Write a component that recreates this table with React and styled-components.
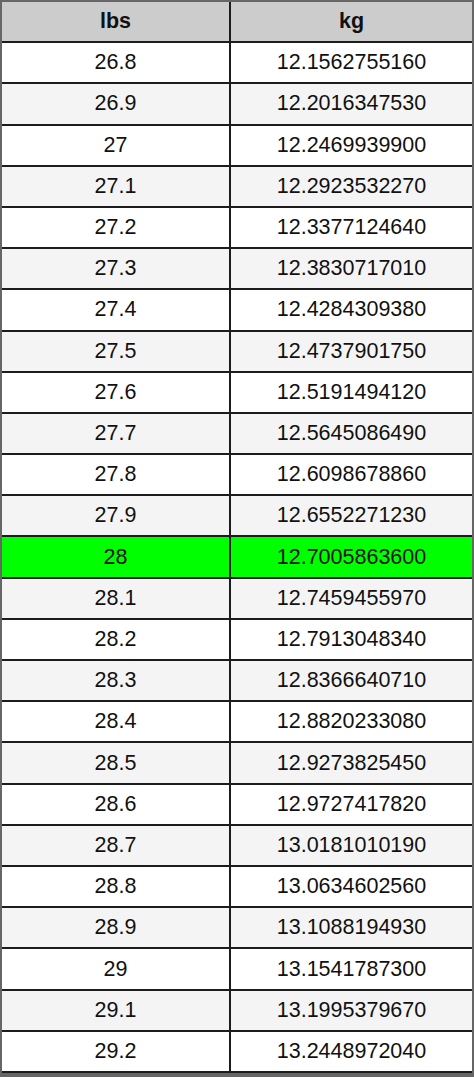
import styled, { createGlobalStyle } from 'styled-components'

const GlobalStyle = createGlobalStyle`
  html, body {
    margin: 0;
    padding: 0;
    background: #ffffff;
  }
  body {
    font-family: 'Liberation Sans', Arial, sans-serif;
  }
`

const rows = [
  ['26.8', '12.1562755160'],
  ['26.9', '12.2016347530'],
  ['27', '12.2469939900'],
  ['27.1', '12.2923532270'],
  ['27.2', '12.3377124640'],
  ['27.3', '12.3830717010'],
  ['27.4', '12.4284309380'],
  ['27.5', '12.4737901750'],
  ['27.6', '12.5191494120'],
  ['27.7', '12.5645086490'],
  ['27.8', '12.6098678860'],
  ['27.9', '12.6552271230'],
  ['28', '12.7005863600'],
  ['28.1', '12.7459455970'],
  ['28.2', '12.7913048340'],
  ['28.3', '12.8366640710'],
  ['28.4', '12.8820233080'],
  ['28.5', '12.9273825450'],
  ['28.6', '12.9727417820'],
  ['28.7', '13.0181010190'],
  ['28.8', '13.0634602560'],
  ['28.9', '13.1088194930'],
  ['29', '13.1541787300'],
  ['29.1', '13.1995379670'],
  ['29.2', '13.2448972040'],
]

const Frame = styled.div`
  box-sizing: border-box;
  width: 474px;
  height: 1077px;
  border: 2px solid #666666;
  border-bottom-width: 4px;
  display: grid;
  grid-template-rows: repeat(26, 1fr);
`

const Row = styled.div`
  display: grid;
  grid-template-columns: 227px 1fr;
  border-bottom: 2px solid #1c1c1c;
  background: ${props => props.bg};
  min-height: 0;
`

const Cell = styled.div`
  display: flex;
  align-items: center;
  justify-content: center;
  font-size: 21.5px;
  font-weight: ${props => (props.head ? 700 : 400)};
  color: #111111;
  & + & {
    border-left: 2px solid #1c1c1c;
  }
`

const rowColor = (lbs, i) => {
  if (lbs === '28') return '#00ff00'
  return i % 2 === 0 ? '#ffffff' : '#f4f4f4'
}

export default function App() {
  return (
    <>
      <GlobalStyle />
      <Frame>
        <Row bg="#cccccc">
          <Cell head>lbs</Cell>
          <Cell head>kg</Cell>
        </Row>
        {rows.map(([lbs, kg], i) => (
          <Row key={lbs} bg={rowColor(lbs, i)}>
            <Cell>{lbs}</Cell>
            <Cell>{kg}</Cell>
          </Row>
        ))}
      </Frame>
    </>
  )
}
